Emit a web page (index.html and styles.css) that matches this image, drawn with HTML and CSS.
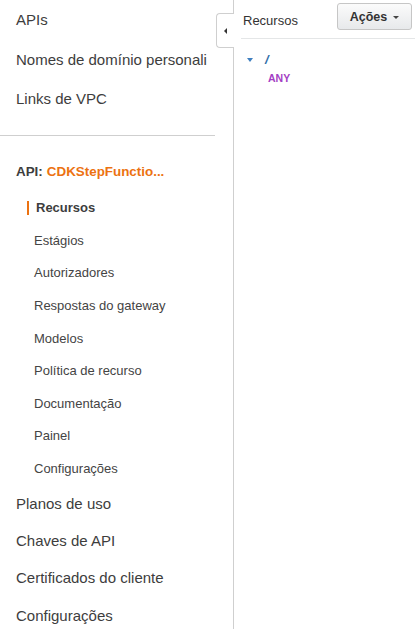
FILE: index.html
```html
<!DOCTYPE html>
<html lang="pt">
<head>
<meta charset="utf-8">
<link rel="stylesheet" href="styles.css">
</head>
<body>
<div class="app">
  <nav class="sidenav">
    <ul class="main-list">
      <li class="main-item">APIs</li>
      <li class="main-item">Nomes de domínio personalizados</li>
      <li class="main-item">Links de VPC</li>
    </ul>
    <div class="divider"></div>
    <div class="api-section">
      <div class="api-heading">API: <span class="api-name">CDKStepFunctio...</span></div>
      <ul class="sub-list">
        <li class="sub-item active">Recursos</li>
        <li class="sub-item">Estágios</li>
        <li class="sub-item">Autorizadores</li>
        <li class="sub-item">Respostas do gateway</li>
        <li class="sub-item">Modelos</li>
        <li class="sub-item">Política de recurso</li>
        <li class="sub-item">Documentação</li>
        <li class="sub-item">Painel</li>
        <li class="sub-item">Configurações</li>
      </ul>
    </div>
    <ul class="bottom-list">
      <li class="bottom-item">Planos de uso</li>
      <li class="bottom-item">Chaves de API</li>
      <li class="bottom-item">Certificados do cliente</li>
      <li class="bottom-item">Configurações</li>
    </ul>
    <div class="collapse-tab"><span class="tab-arrow"></span></div>
  </nav>
  <main class="panel">
    <div class="panel-header">
      <span class="panel-title">Recursos</span>
      <button class="actions-btn">Ações <span class="btn-caret"></span></button>
    </div>
    <div class="tree">
      <div class="tree-row">
        <span class="tree-caret"></span>
        <span class="tree-path">/</span>
      </div>
      <div class="tree-method">ANY</div>
    </div>
  </main>
</div>
</body>
</html>
```
FILE: styles.css
```css
* { box-sizing: border-box; }
html, body { margin: 0; padding: 0; background: #fff; }
body {
  font-family: "Liberation Sans", Arial, Helvetica, sans-serif;
  color: #444;
  width: 415px;
  height: 629px;
  overflow: hidden;
}
ul { list-style: none; margin: 0; padding: 0; }

.app { display: flex; height: 629px; }

.sidenav {
  position: relative;
  width: 234px;
  flex: none;
  border-right: 1px solid #cfcfcf;
}

.main-list { padding-top: 0; }
.main-item {
  height: 39.5px;
  display: flex;
  align-items: center;
  padding-left: 16px;
  width: 207px;
  font-size: 15px;
  color: #3d3d3d;
  white-space: nowrap;
  overflow: hidden;
}

.divider {
  margin-top: 16px;
  width: 215px;
  border-top: 1px solid #cfcfcf;
}

.api-section { padding-top: 20px; }
.api-heading {
  height: 32px;
  display: flex;
  align-items: center;
  padding-left: 16px;
  font-size: 13.4px;
  font-weight: bold;
  color: #3d3d3d;
  margin-bottom: 4px;
  white-space: nowrap;
}
.api-name { color: #ec7211; margin-left: 4px; }

.sub-item {
  height: 32.6px;
  display: flex;
  align-items: center;
  padding-left: 34px;
  font-size: 13px;
  color: #444;
}
.sub-item.active {
  font-weight: bold;
  padding-left: 27px;
  color: #3d3d3d;
}
.sub-item.active::before {
  content: "";
  width: 2px;
  height: 14px;
  background: #ec7211;
  margin-right: 7px;
}

.bottom-item {
  height: 37.2px;
  display: flex;
  align-items: center;
  padding-left: 16px;
  font-size: 15px;
  color: #3d3d3d;
}

.collapse-tab {
  position: absolute;
  top: 13px;
  right: -1px;
  width: 18px;
  height: 35px;
  background: #fff;
  border: 1px solid #cfcfcf;
  border-right: none;
  border-radius: 4px 0 0 4px;
  display: flex;
  align-items: center;
  justify-content: center;
}
.tab-arrow {
  width: 0; height: 0;
  border-top: 3px solid transparent;
  border-bottom: 3px solid transparent;
  border-right: 3px solid #333;
  margin-right: 1px;
}

.panel {
  flex: 1;
  padding-left: 7px;
}
.panel-header {
  height: 39px;
  display: flex;
  align-items: center;
  justify-content: space-between;
  border-bottom: 1px solid #e4e6e7;
  padding-left: 2px;
  padding-right: 3px;
}
.panel-title {
  font-size: 13px;
  color: #333;
  margin-top: 3px;
}
.actions-btn {
  height: 27px;
  width: 75px;
  margin-top: -5px;
  border: 1px solid #c6c6c6;
  border-radius: 3px;
  background: linear-gradient(#fbfbfb, #e7e9eb);
  font-family: "Liberation Sans", Arial, sans-serif;
  font-size: 12.5px;
  font-weight: bold;
  color: #333;
  display: flex;
  align-items: center;
  justify-content: center;
  gap: 6px;
  padding: 0;
}
.btn-caret {
  width: 0; height: 0;
  border-left: 3px solid transparent;
  border-right: 3px solid transparent;
  border-top: 3px solid #444;
  margin-top: 2px;
}

.tree { padding-top: 12px; padding-left: 6px; }
.tree-row { display: flex; align-items: center; height: 16px; }
.tree-caret {
  width: 0; height: 0;
  border-left: 3.5px solid transparent;
  border-right: 3.5px solid transparent;
  border-top: 4px solid #3f7fc0;
  margin-top: 1px;
}
.tree-path {
  margin-left: 12px;
  font-size: 13px;
  font-weight: bold;
  font-style: italic;
  color: #2f6ea8;
}
.tree-method {
  margin-top: 5px;
  padding-left: 21px;
  font-size: 10.5px;
  font-weight: bold;
  color: #a440c4;
}
```
